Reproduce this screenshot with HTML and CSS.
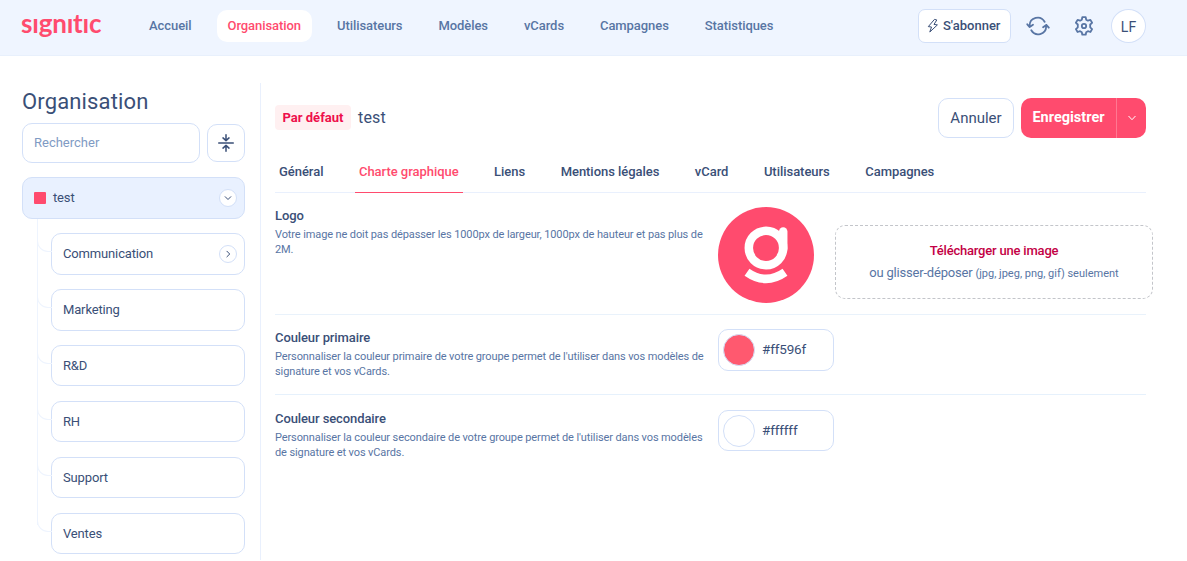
FILE: index.html
```
<!DOCTYPE html>
<html lang="fr">
<head>
  <meta charset="UTF-8">
  <title>Signitic - Organisation</title>
  <link rel="stylesheet" href="styles.css">
</head>
<body>
  <header class="topbar">
    <a class="brand">sıgnıtıc</a>
    <nav class="nav">
      <a class="nav-link">Accueil</a>
      <a class="nav-link active">Organisation</a>
      <a class="nav-link">Utilisateurs</a>
      <a class="nav-link">Modèles</a>
      <a class="nav-link">vCards</a>
      <a class="nav-link">Campagnes</a>
      <a class="nav-link">Statistiques</a>
    </nav>
    <div class="topbar-actions">
      <button class="btn-subscribe">
        <svg width="12" height="16" viewBox="0 0 12 16"><path d="M7.2 1.7 1.300 8.600l3.200.4-1.700 5 7.600-7.100-3.400-.5 2.600-4.100z"/></svg>
        S'abonner
      </button>
      <svg class="icon-sync" width="24" height="20" viewBox="0 0 24 20">
        <path d="M3.6 11V9.600A8 8 0 0 1 18.600 5.800M1.300 8.300l2.400 2.800 3.300-2.300M20.200 9v1.500A8 8 0 0 1 5.300 14.300M22.800 11.700l-2.500-2.800-3.200 2.300"/>
      </svg>
      <svg class="icon-gear" width="20" height="20" viewBox="0 0 20 20">
        <path d="M8.300 1.200h3.400l.5 2.500 1.700 1 2.500-.8 1.700 2.900-1.900 1.700v2.800l1.900 1.800-1.700 2.900-2.500-.8-1.700 1-.5 2.500H8.300l-.5-2.500-1.700-1-2.500.8-1.700-2.900 1.900-1.800V8.500L1.900 6.800l1.700-2.900 2.500.8 1.700-1z"/>
        <circle cx="10" cy="10" r="2.200"/>
      </svg>
      <span class="avatar">LF</span>
    </div>
  </header>

  <div class="page">
    <aside class="sidebar">
      <h1 class="sidebar-title">Organisation</h1>
      <div class="search-row">
        <input class="search" type="text" placeholder="Rechercher">
        <button class="btn-collapse">
          <svg width="16" height="18" viewBox="0 0 16 18">
            <path d="M.7 9h14.600M8 .8v5.400M5 3.900l3 2.700 3-2.700M8 17.200v-5.400M5 14.100l3-2.700 3 2.700"/>
          </svg>
        </button>
      </div>
      <div class="group group-root">
        <span class="group-color"></span>
        <span>test</span>
        <span class="toggle"><svg width="8" height="8" viewBox="0 0 8 8"><path d="M1.200 2.700 4 5.500l2.800-2.800"/></svg></span>
      </div>
      <div class="children">
        <div class="group">
          <span>Communication</span>
          <span class="toggle"><svg width="8" height="8" viewBox="0 0 8 8"><path d="M2.900 1.200 5.700 4 2.900 6.800"/></svg></span>
        </div>
        <div class="group"><span>Marketing</span></div>
        <div class="group"><span>R&amp;D</span></div>
        <div class="group"><span>RH</span></div>
        <div class="group"><span>Support</span></div>
        <div class="group"><span>Ventes</span></div>
      </div>
    </aside>

    <main class="content">
      <div class="content-head">
        <span class="badge">Par défaut</span>
        <h2 class="group-name">test</h2>
        <button class="btn-cancel">Annuler</button>
        <div class="btn-save">
          <span class="save-label">Enregistrer</span>
          <span class="save-more"><svg width="8" height="8" viewBox="0 0 8 8"><path d="M.8 2.300 4 5.700l3.200-3.400"/></svg></span>
        </div>
      </div>

      <div class="tabs">
        <a class="tab">Général</a>
        <a class="tab active">Charte graphique</a>
        <a class="tab">Liens</a>
        <a class="tab">Mentions légales</a>
        <a class="tab">vCard</a>
        <a class="tab">Utilisateurs</a>
        <a class="tab">Campagnes</a>
      </div>

      <section class="row row-logo">
        <div class="row-text">
          <h3>Logo</h3>
          <p>Votre image ne doit pas dépasser les 1000px de largeur, 1000px de hauteur et pas plus de<br>2M.</p>
        </div>
        <svg class="logo" width="96" height="96" viewBox="0 0 96 96">
          <circle class="logo-bg" cx="48" cy="48" r="48"/>
          <circle class="logo-line" cx="48" cy="41" r="17.200"/>
          <path class="logo-line stem" d="M65.200 24.500V42"/>
          <path class="logo-line" d="M29 65.200Q48 78.500 67 65.200"/>
        </svg>
        <div class="dropzone">
          <strong>Télécharger une image</strong>
          <span class="drop-hint">ou glisser-déposer <small>(jpg, jpeg, png, gif) seulement</small></span>
        </div>
      </section>

      <section class="row row-primary">
        <div class="row-text">
          <h3>Couleur primaire</h3>
          <p>Personnaliser la couleur primaire de votre groupe permet de l'utiliser dans vos modèles de<br>signature et vos vCards.</p>
        </div>
        <div class="color-field"><span class="swatch primary"></span><span class="hex">#ff596f</span></div>
      </section>

      <section class="row row-secondary">
        <div class="row-text">
          <h3>Couleur secondaire</h3>
          <p>Personnaliser la couleur secondaire de votre groupe permet de l'utiliser dans vos modèles<br>de signature et vos vCards.</p>
        </div>
        <div class="color-field"><span class="swatch"></span><span class="hex">#ffffff</span></div>
      </section>
    </main>
  </div>
</body>
</html>
```
FILE: styles.css
```
* {
  box-sizing: border-box;
}

body {
  margin: 0;
  height: 561px;
  overflow: hidden;
  background: #fff;
  color: #3a4f77;
  font-family: Roboto, "Liberation Sans", sans-serif;
  font-size: 14px;
}

h1, h2, h3, p {
  margin: 0;
  font-weight: 400;
}

button, input {
  font-family: inherit;
  color: inherit;
  background: #fff;
  border: 1px solid #d3e0f8;
  padding: 0;
}

svg {
  display: block;
  flex: none;
  fill: none;
  stroke: currentColor;
  stroke-linecap: round;
  stroke-linejoin: round;
}

/* top bar */
.topbar {
  display: flex;
  align-items: center;
  height: 56px;
  padding: 0 41px 4px 21px;
  background: #eff5ff;
  border-bottom: 1px solid #e8f0fc;
}

.brand {
  width: 117px;
  color: #ff4b6e;
  font-family: Lato, sans-serif;
  font-size: 26px;
  font-weight: 700;
  line-height: 30px;
  letter-spacing: -.2px;
  margin-top: -6px;
}

.nav {
  display: flex;
  gap: 14px;
}

.nav-link {
  height: 32px;
  padding: 0 11px;
  border-radius: 10px;
  line-height: 31px;
  font-size: 13px;
  font-weight: 500;
  letter-spacing: -.07px;
  color: #5875a4;
}

.nav-link.active {
  background: #fff;
  color: #ff4b6e;
}

.topbar-actions {
  display: flex;
  align-items: center;
  margin-left: auto;
  color: #5875a4;
}

.btn-subscribe {
  display: flex;
  align-items: center;
  gap: 4px;
  width: 93px;
  height: 34px;
  padding-left: 8px;
  border-radius: 7px;
  font-size: 13px;
  font-weight: 500;
  color: #3a4f77;
  white-space: nowrap;
}

.icon-sync {
  margin-left: 15px;
  stroke-width: 1.8;
}

.icon-gear {
  margin-left: 24px;
  stroke-width: 1.8;
}

.avatar {
  width: 35px;
  height: 34px;
  margin-left: 17px;
  border: 1px solid #d3e0f8;
  border-radius: 50%;
  background: #fff;
  color: #3a4f77;
  font-size: 14px;
  line-height: 34px;
  text-align: center;
}

/* layout */
.page {
  display: flex;
  padding: 27px 41px 0 22px;
}

.sidebar {
  flex: none;
  width: 239px;
  height: 477px;
  padding-right: 15px;
  border-right: 1px solid #e9f0fd;
}

.sidebar-title {
  height: 40px;
  line-height: 38px;
  font-size: 22px;
  letter-spacing: .15px;
}

.search-row {
  display: flex;
  align-items: center;
  justify-content: space-between;
  margin-bottom: 14.350px;
}

.search {
  width: 178px;
  height: 40px;
  padding: 0 11px 2px;
  border-radius: 10px;
  font-size: 13px;
}

.search::placeholder {
  color: #7f9bc4;
}

.btn-collapse {
  display: flex;
  align-items: center;
  justify-content: center;
  width: 38px;
  height: 38px;
  border-radius: 10px;
}

.btn-collapse svg {
  stroke-width: 1.5;
}

.group {
  position: relative;
  display: flex;
  align-items: center;
  height: 41.300px;
  padding: 0 7px 0 11px;
  background: #fff;
  border: 1px solid #d3e0f8;
  border-radius: 10px;
  font-size: 13px;
  letter-spacing: -.15px;
}

.group > span:not([class]) {
  padding-bottom: 1px;
}

.group-root {
  gap: 7px;
  background: #e9f1ff;
}

.group-color {
  width: 12px;
  height: 12px;
  border-radius: 1px;
  background: #ff4b6e;
}

.toggle {
  display: flex;
  align-items: center;
  justify-content: center;
  width: 18px;
  height: 18px;
  margin-left: auto;
  border: 1px solid #d3e0f8;
  border-radius: 50%;
  background: #fff;
}

.children {
  position: relative;
  display: flex;
  flex-direction: column;
  gap: 14.650px;
  padding: 14.650px 0 0 29px;
}

.children::before {
  content: "";
  position: absolute;
  left: 15px;
  top: 0;
  bottom: 29px;
  width: 1px;
  background: #eef4fe;
}

.children .group::before {
  content: "";
  position: absolute;
  left: -15px;
  top: 3px;
  width: 14px;
  height: 14px;
  border: solid #eef4fe;
  border-width: 0 0 1px 1px;
  border-bottom-left-radius: 11px;
}

/* content */
.content {
  flex: 1;
  min-width: 0;
  padding: 15px 0 0 14px;
}

.content-head {
  display: flex;
  align-items: center;
  height: 40px;
}

.badge {
  width: 76px;
  height: 25px;
  margin-bottom: 1px;
  border-radius: 4px;
  background: #fff0f1;
  color: #ee0f4c;
  font-size: 13px;
  font-weight: 700;
  line-height: 25px;
  text-align: center;
}

.group-name {
  margin: 0 0 2px 7px;
  font-size: 16px;
  letter-spacing: .2px;
}

.btn-cancel {
  width: 76px;
  height: 40px;
  margin-left: auto;
  border-radius: 10px;
  font-size: 15px;
}

.btn-save {
  display: flex;
  width: 125px;
  height: 40px;
  margin-left: 7px;
  border-radius: 10px;
  background: #ff4b6e;
  color: #fff;
  line-height: 40px;
}

.save-label {
  width: 96px;
  border-right: 1px solid #ff7892;
  font-size: 14.500px;
  font-weight: 700;
  text-align: center;
}

.save-more {
  display: flex;
  flex: 1;
  align-items: center;
  justify-content: center;
}

.tabs {
  display: flex;
  gap: 27.500px;
  height: 55px;
  border-bottom: 1px solid #e9f0fd;
}

.tab {
  height: 55px;
  padding: 13px 4px 0;
  line-height: 41px;
  font-size: 13px;
  font-weight: 500;
  letter-spacing: -.04px;
  white-space: nowrap;
}

.tab.active {
  color: #ff4b6e;
  border-bottom: 1px solid #ff4b6e;
}

.row {
  display: flex;
  align-items: flex-start;
}

.row-logo {
  height: 122px;
  padding-top: 14px;
  border-bottom: 1px solid #e9f2fb;
}

.row-primary {
  height: 80px;
  padding-top: 14px;
  border-bottom: 1px solid #e6f1fc;
}

.row-secondary {
  padding-top: 15px;
}

.row-text {
  flex: none;
  width: 443px;
  white-space: nowrap;
}

.row-text h3 {
  height: 21px;
  line-height: 18px;
  font-size: 13px;
  font-weight: 500;
  letter-spacing: -.1px;
}

.row-text p {
  color: #5875a4;
  font-size: 11px;
  line-height: 14.500px;
  letter-spacing: -.11px;
}

.logo-bg {
  fill: #ff4b6e;
  stroke: none;
}

.logo-line {
  stroke: #fff;
  stroke-width: 8.500;
  stroke-linecap: butt;
}

.logo-line.stem {
  stroke-linecap: round;
}

.dropzone {
  display: flex;
  flex: none;
  flex-direction: column;
  align-items: center;
  width: 318px;
  height: 74px;
  margin: 18px 0 0 21px;
  padding-top: 14px;
  border: 1px dashed #c3c5ca;
  border-radius: 10px;
  line-height: 22px;
  white-space: nowrap;
}

.dropzone strong {
  color: #c30045;
  font-size: 13px;
  font-weight: 500;
  letter-spacing: -.2px;
}

.drop-hint {
  color: #5875a4;
  font-size: 13px;
  letter-spacing: -.2px;
}

.drop-hint small {
  font-size: 11px;
  letter-spacing: 0;
}

.color-field {
  display: flex;
  align-items: center;
  gap: 7px;
  width: 116px;
  height: 42px;
  padding-left: 4px;
  border: 1px solid #d3e0f8;
  border-radius: 10px;
  font-size: 13.500px;
  letter-spacing: -.15px;
}

.row-secondary .color-field {
  height: 41px;
}

.hex {
  padding-bottom: 2px;
}

.swatch {
  width: 32px;
  height: 32px;
  border: 1px solid #d3e0f8;
  border-radius: 50%;
}

.swatch.primary {
  background: #ff596f;
}
```
